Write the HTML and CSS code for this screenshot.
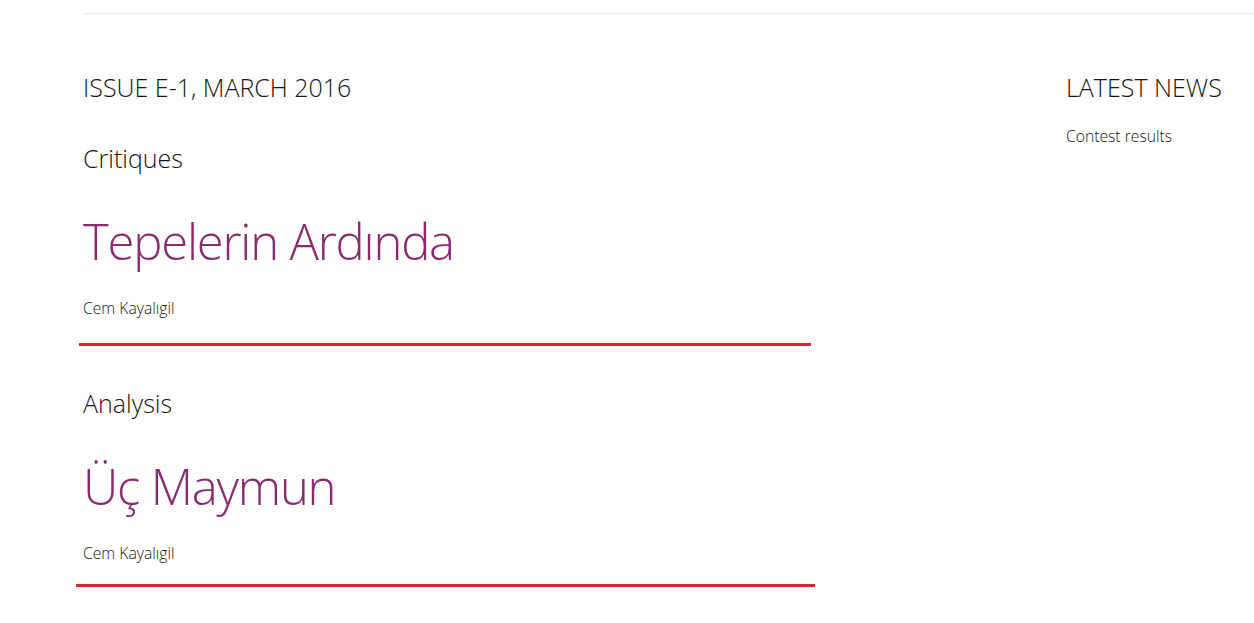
FILE: index.html
```html
<!DOCTYPE html>
<html lang="en">
  <head>
    <meta http-equiv="content-type" content="text/html; charset=UTF-8" />
    <title>Issue E-1, March 2016</title>
    <link rel="stylesheet" href="styles.css">
  </head>

  <body>
    <div class="page">
      <div class="topRule"></div>
      <div class="columns">
        <div class="main">
          <h2 class="issueTitle">ISSUE E-1, MARCH 2016</h2>

          <div class="section">
            <h3 class="sectionTitle">Critiques</h3>
            <h1 class="articleTitle"><a href="#">Tepelerin Ardında</a></h1>
            <p class="author">Cem Kayalıgil</p>
            <hr class="redRule first" />
          </div>

          <div class="section">
            <h3 class="sectionTitle">Analysis</h3>
            <h1 class="articleTitle"><a href="#">Üç Maymun</a></h1>
            <p class="author">Cem Kayalıgil</p>
            <hr class="redRule second" />
          </div>
        </div>

        <div class="sidebar">
          <h2 class="issueTitle">LATEST NEWS</h2>
          <p class="newsItem">Contest results</p>
        </div>
      </div>
    </div>
  </body>
</html>
```

FILE: styles.css
```css
body {
  margin: 0;
  background-color: white;
  color: #151515;
  font-family: "Open Sans", "Liberation Sans", sans-serif;
  font-weight: 300;
}
.page {
  margin-left: 83px;
  padding-top: 13px;
}
.topRule {
  border-top: 1px solid #ececec;
}
.columns {
  display: flex;
  padding-top: 55px;
}
.main {
  width: 983px;
}
.sidebar {
  flex: 1;
}
.issueTitle {
  font-size: 25px;
  font-weight: 300;
  line-height: 36px;
  margin: 0;
}
.sectionTitle {
  font-size: 25px;
  font-weight: 300;
  line-height: 34px;
  margin: 36px 0 0 0;
}
.section + .section .sectionTitle {
  margin-top: 40px;
}
.articleTitle {
  font-size: 49px;
  font-weight: 300;
  line-height: 64px;
  letter-spacing: -1.2px;
  margin: 34px 0 0 0;
}
.articleTitle a {
  color: #8b2b6f;
  text-decoration: none;
}
.author {
  font-size: 15.7px;
  line-height: 22px;
  margin: 24px 0 0 0;
}
.redRule {
  border: 0;
  height: 3px;
  background-color: #d9262f;
}
.redRule.first {
  width: 732px;
  margin: 24px 0 0 -4px;
}
.redRule.second {
  width: 739px;
  margin: 20px 0 0 -7px;
}
.newsItem {
  font-size: 15.7px;
  line-height: 22px;
  margin: 20px 0 0 0;
}
```
